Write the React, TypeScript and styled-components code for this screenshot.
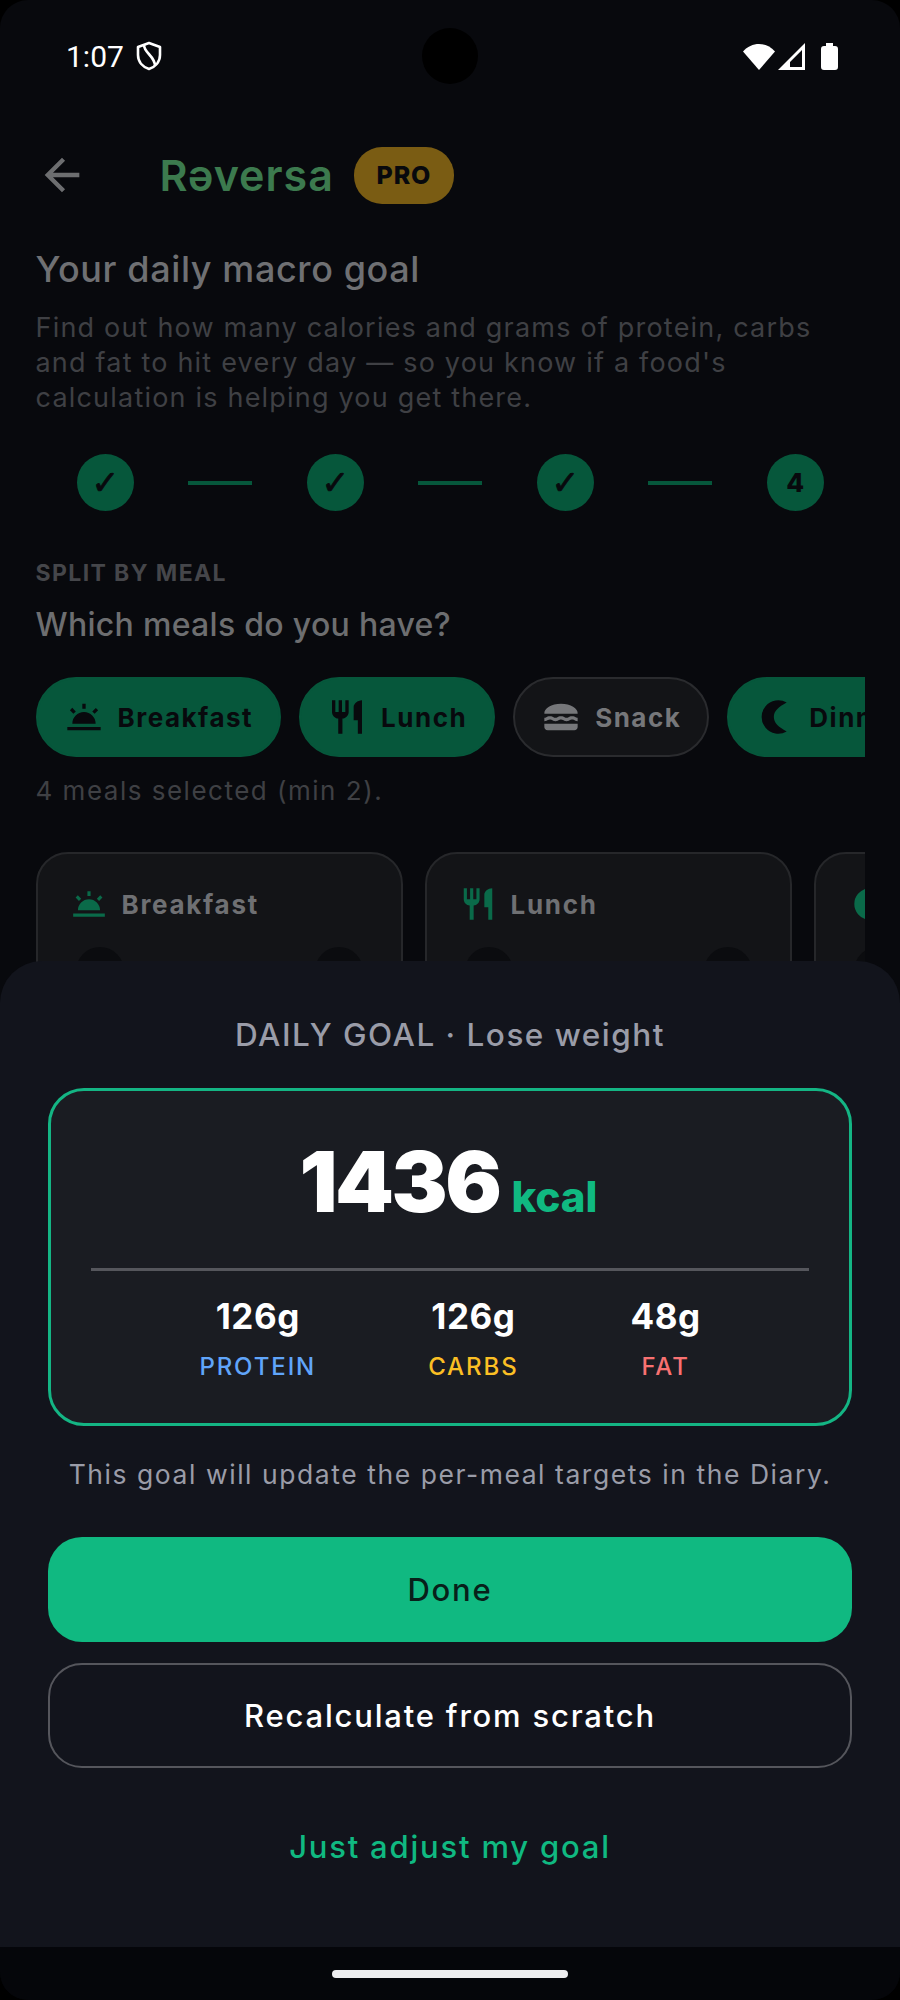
import React from 'react';
import styled, { createGlobalStyle } from 'styled-components';
import { MdArrowBack, MdWbTwilight, MdRestaurant, MdLunchDining } from 'react-icons/md';

const GlobalStyle = createGlobalStyle`
  html, body {
    margin: 0;
    padding: 0;
    background: #000;
  }
  * {
    box-sizing: border-box;
  }
`;

const Phone = styled.div`
  position: relative;
  width: 900px;
  height: 2000px;
  display: flex;
  flex-direction: column;
  overflow: hidden;
  border-radius: 28px;
  background: #08090d;
  font-family: Inter, "Noto Sans", sans-serif;
`;

const StatusBar = styled.div`
  height: 112px;
  flex: none;
  display: grid;
  grid-template-columns: 1fr 56px 1fr;
  align-items: center;
  padding: 0 62px;
`;

const StatusLeft = styled.div`
  display: flex;
  align-items: center;
  gap: 12px;
  padding-left: 4px;
  color: #fff;
  font-family: Roboto, sans-serif;
  font-size: 30px;
`;

const Camera = styled.div`
  width: 56px;
  height: 56px;
  border-radius: 50%;
  background: #000;
`;

const StatusRight = styled.div`
  display: flex;
  align-items: center;
  justify-content: flex-end;
  gap: 3px;
`;

const Main = styled.div`
  flex: 1;
  min-height: 0;
  overflow: hidden;
  padding: 31px 35px 0 35.5px;
`;

const Header = styled.div`
  height: 64px;
  display: flex;
  align-items: center;
`;

const BackIcon = styled(MdArrowBack)`
  width: 52px;
  height: 52px;
  margin-right: 72px;
  color: #6d6e70;
`;

const Logo = styled.div`
  color: #3c7a4e;
  font-size: 43px;
  font-weight: 600;
  letter-spacing: 1px;
`;

const ProBadge = styled.div`
  width: 100px;
  height: 57px;
  margin-left: 20px;
  display: flex;
  align-items: center;
  justify-content: center;
  border-radius: 28px;
  background: #7a5c13;
  color: #08090d;
  font-size: 25px;
  font-weight: 800;
  letter-spacing: 0.8px;
`;

const Title = styled.h1`
  margin: 40px 0 0;
  color: #6f7073;
  font-size: 36px;
  font-weight: 500;
  line-height: 44px;
  letter-spacing: 0.6px;
`;

const Description = styled.p`
  margin: 19px 0 0;
  color: #3f4044;
  font-size: 27px;
  font-weight: 400;
  line-height: 35px;
  letter-spacing: 1.2px;
`;

const Stepper = styled.div`
  margin-top: 39px;
  display: flex;
  align-items: center;
  justify-content: center;
  gap: 54.5px;
`;

const StepDot = styled.div`
  width: 57px;
  height: 57px;
  display: flex;
  align-items: center;
  justify-content: center;
  border-radius: 50%;
  background: #06573b;
  color: #08090d;
  font-size: 26px;
  font-weight: 800;
`;

const StepCheck = styled.span`
  font-family: "DejaVu Sans", sans-serif;
  font-size: 33px;
  font-weight: 700;
  -webkit-text-stroke: 0.8px #08090d;
`;

const StepLine = styled.div`
  width: 64px;
  height: 4px;
  background: #06573b;
`;

const SectionLabel = styled.div`
  margin-top: 48px;
  color: #45464a;
  font-size: 23px;
  font-weight: 700;
  line-height: 28px;
  letter-spacing: 1.4px;
`;

const Question = styled.h2`
  margin: 18px 0 0;
  color: #6d6e70;
  font-size: 32px;
  font-weight: 500;
  line-height: 40px;
  letter-spacing: 0.3px;
`;

const ChipRow = styled.div`
  margin-top: 32px;
  display: flex;
  gap: 18px;
  overflow: hidden;
`;

const Chip = styled.div<{ $on: boolean }>`
  flex: none;
  height: 80px;
  display: flex;
  align-items: center;
  gap: 14px;
  padding: 0 26px;
  border-radius: 40px;
  border: 2px solid ${(p) => (p.$on ? '#06573b' : '#2a2b2e')};
  background: ${(p) => (p.$on ? '#06573b' : '#131417')};
  color: ${(p) => (p.$on ? '#08090d' : '#76777a')};
  font-size: 26px;
  font-weight: 700;
  letter-spacing: 1.5px;
  white-space: nowrap;
`;

const Caption = styled.div`
  margin-top: 17px;
  color: #3f4044;
  font-size: 26px;
  line-height: 34px;
  letter-spacing: 1.5px;
`;

const MealCards = styled.div`
  margin-top: 44px;
  display: flex;
  gap: 22px;
  overflow: hidden;
`;

const MealCard = styled.div`
  flex: none;
  width: 367px;
  height: 200px;
  padding: 32px 32px;
  border-radius: 32px;
  border: 2px solid #26272a;
  background: #131417;
`;

const MealHead = styled.div`
  display: flex;
  align-items: center;
  gap: 14px;
  height: 36px;
  color: #6f7073;
  font-size: 26px;
  font-weight: 700;
  letter-spacing: 1.7px;
`;

const RoundButtons = styled.div`
  margin-top: 25px;
  padding: 0 6px;
  display: flex;
  justify-content: space-between;
`;

const RoundButton = styled.div`
  width: 48px;
  height: 48px;
  border-radius: 50%;
  background: #0b0c0f;
`;

const Sheet = styled.div`
  position: absolute;
  left: 0;
  right: 0;
  top: 961px;
  height: 986px;
  padding: 54px 48px 0;
  border-radius: 42px 42px 0 0;
  background: #12141c;
  display: flex;
  flex-direction: column;
  align-items: stretch;
`;

const SheetTitle = styled.div`
  color: #9a9ca8;
  font-size: 31.5px;
  font-weight: 500;
  line-height: 40px;
  letter-spacing: 1.5px;
  text-align: center;
`;

const GoalCard = styled.div`
  margin-top: 33px;
  height: 338px;
  padding: 41px 40px 0;
  border: 3px solid #14b584;
  border-radius: 36px;
  background: #1a1c22;
`;

const KcalRow = styled.div`
  height: 100px;
  display: flex;
  align-items: baseline;
  justify-content: center;
  gap: 12px;
  padding-right: 3px;
  line-height: 100px;
`;

const KcalValue = styled.span`
  color: #fff;
  font-size: 84px;
  font-weight: 900;
  letter-spacing: -2.5px;
`;

const KcalUnit = styled.span`
  color: #10b981;
  font-size: 42px;
  font-weight: 800;
`;

const Divider = styled.div`
  height: 3px;
  margin-top: 36px;
  background: #55565c;
`;

const MacroRow = styled.div`
  margin-top: 23px;
  display: flex;
  justify-content: center;
  gap: 112px;
`;

const Macro = styled.div`
  display: flex;
  flex-direction: column;
  align-items: center;
`;

const MacroValue = styled.div`
  color: #fff;
  font-size: 35px;
  font-weight: 700;
  line-height: 44px;
  letter-spacing: 0.5px;
`;

const MacroLabel = styled.div<{ $color: string }>`
  margin-top: 14px;
  color: ${(p) => p.$color};
  font-size: 24px;
  font-weight: 500;
  line-height: 30px;
  letter-spacing: 1.9px;
`;

const SheetNote = styled.div`
  margin-top: 30px;
  color: #9a9ca8;
  font-size: 26.5px;
  line-height: 36px;
  letter-spacing: 1.55px;
  text-align: center;
  white-space: nowrap;
`;

const PrimaryButton = styled.button`
  height: 105px;
  margin-top: 45px;
  border: 0;
  border-radius: 34px;
  background: #10b981;
  color: #08201a;
  font-family: inherit;
  font-size: 31px;
  font-weight: 500;
  letter-spacing: 1.8px;
`;

const OutlineButton = styled.button`
  height: 105px;
  margin-top: 21px;
  border: 2px solid #55565c;
  border-radius: 34px;
  background: transparent;
  color: #fff;
  font-family: inherit;
  font-size: 31px;
  font-weight: 500;
  letter-spacing: 1.8px;
`;

const LinkButton = styled.div`
  margin-top: 59px;
  color: #10b981;
  font-size: 31px;
  font-weight: 500;
  line-height: 40px;
  letter-spacing: 1.8px;
  text-align: center;
`;

const NavBar = styled.div`
  height: 53px;
  flex: none;
  display: flex;
  justify-content: center;
  padding-top: 23px;
  background: #05060a;
`;

const HomePill = styled.div`
  width: 236px;
  height: 8px;
  border-radius: 4px;
  background: #eeeef0;
`;

const BatteryIcon = styled.svg`
  margin-left: 13px;
`;

type MealIcon = React.ComponentType<{ size?: number; color?: string }>;

// thin crescent, the material "nightlight" is too fat for this
function MoonIcon({ size, color = 'currentColor' }: { size?: number; color?: string }) {
  return (
    <svg width={size} height={size} viewBox="0 0 24 24" fill={color}>
      <path d="M19 3.35 A10 10 0 1 0 19 20.65 C14 18 11.3 15.5 11.3 12 C11.3 8.5 14 6 19 3.35 Z" />
    </svg>
  );
}

const chips: { label: string; Icon: MealIcon; on: boolean }[] = [
  { label: 'Breakfast', Icon: MdWbTwilight, on: true },
  { label: 'Lunch', Icon: MdRestaurant, on: true },
  { label: 'Snack', Icon: MdLunchDining, on: false },
  { label: 'Dinner', Icon: MoonIcon, on: true },
];

const macros = [
  { value: '126g', label: 'PROTEIN', color: '#60a5fa' },
  { value: '126g', label: 'CARBS', color: '#fbbf24' },
  { value: '48g', label: 'FAT', color: '#f87171' },
];

function ShieldIcon() {
  return (
    <svg width="26" height="30" viewBox="0 0 26 30" fill="none" stroke="#fff" strokeWidth="2.6">
      <path d="M13 2 L24 6 V14 C24 21 19 26 13 28 C7 26 2 21 2 14 V6 Z" strokeLinejoin="round" />
      <path d="M8 4 C8 12 19 15 19 25" />
    </svg>
  );
}

function SignalIcons() {
  return (
    <>
      <svg width="32" height="27" viewBox="0 0 32 27" fill="#fff">
        <path d="M0 8.5 C8.5 -1.5 23.5 -1.5 32 8.5 L16 27 Z" />
      </svg>
      <svg width="27" height="27" viewBox="0 0 27 27" fill="#fff" fillRule="evenodd">
        <path d="M27 0 V27 H0 Z M24 7 L12 19 V24 H24 Z" />
      </svg>
      <BatteryIcon width="17" height="27" viewBox="0 0 17 27" fill="#fff">
        <path d="M5 0 H12 V3 H14 C16 3 17 4 17 6 V24 C17 26 16 27 14 27 H3 C1 27 0 26 0 24 V6 C0 4 1 3 3 3 H5 Z" />
      </BatteryIcon>
    </>
  );
}

export default function App() {
  return (
    <>
      <GlobalStyle />
      <Phone>
        <StatusBar>
          <StatusLeft>
            1:07
            <ShieldIcon />
          </StatusLeft>
          <Camera />
          <StatusRight>
            <SignalIcons />
          </StatusRight>
        </StatusBar>
        <Main>
          <Header>
            <BackIcon />
            <Logo>Rəversa</Logo>
            <ProBadge>PRO</ProBadge>
          </Header>
          <Title>Your daily macro goal</Title>
          <Description>
            Find out how many calories and grams of protein, carbs
            <br />
            and fat to hit every day — so you know if a food's
            <br />
            calculation is helping you get there.
          </Description>
          <Stepper>
            {['✓', '✓', '✓', '4'].map((step, i) => (
              <React.Fragment key={i}>
                {i > 0 && <StepLine />}
                <StepDot>{step === '✓' ? <StepCheck>{step}</StepCheck> : step}</StepDot>
              </React.Fragment>
            ))}
          </Stepper>
          <SectionLabel>SPLIT BY MEAL</SectionLabel>
          <Question>Which meals do you have?</Question>
          <ChipRow>
            {chips.map(({ label, Icon, on }) => (
              <Chip key={label} $on={on}>
                <Icon size={40} />
                {label}
              </Chip>
            ))}
          </ChipRow>
          <Caption>4 meals selected (min 2).</Caption>
          <MealCards>
            {chips
              .filter((c) => c.on)
              .map(({ label, Icon }) => (
                <MealCard key={label}>
                  <MealHead>
                    <Icon size={38} color="#0a6a49" />
                    {label}
                  </MealHead>
                  <RoundButtons>
                    <RoundButton />
                    <RoundButton />
                  </RoundButtons>
                </MealCard>
              ))}
          </MealCards>
        </Main>
        <Sheet>
          <SheetTitle>DAILY GOAL · Lose weight</SheetTitle>
          <GoalCard>
            <KcalRow>
              <KcalValue>1436</KcalValue>
              <KcalUnit>kcal</KcalUnit>
            </KcalRow>
            <Divider />
            <MacroRow>
              {macros.map((m) => (
                <Macro key={m.label}>
                  <MacroValue>{m.value}</MacroValue>
                  <MacroLabel $color={m.color}>{m.label}</MacroLabel>
                </Macro>
              ))}
            </MacroRow>
          </GoalCard>
          <SheetNote>This goal will update the per-meal targets in the Diary.</SheetNote>
          <PrimaryButton>Done</PrimaryButton>
          <OutlineButton>Recalculate from scratch</OutlineButton>
          <LinkButton>Just adjust my goal</LinkButton>
        </Sheet>
        <NavBar>
          <HomePill />
        </NavBar>
      </Phone>
    </>
  );
}
